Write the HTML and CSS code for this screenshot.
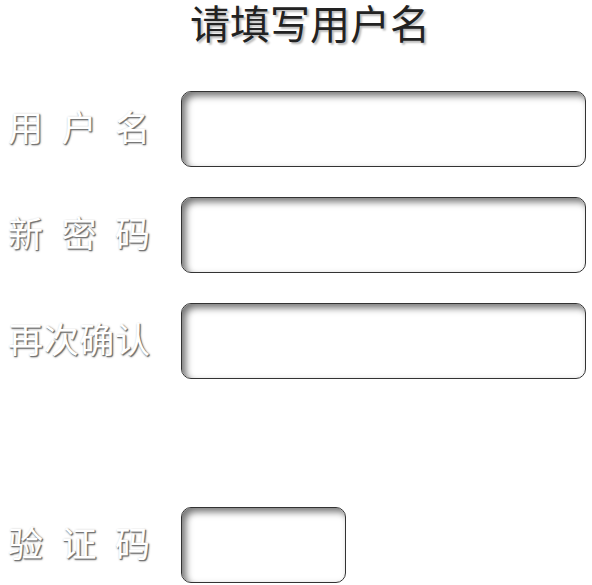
FILE: index.html
```html
<!DOCTYPE html>
<html lang="zh-CN">
<head>
    <meta charset="UTF-8">
    <meta name="viewport" content="width=device-width, initial-scale=1.0">
    <title>请填写用户名</title>
    <link rel="stylesheet" href="styles.css">
</head>
<body>

    <h1 class="title">请填写用户名</h1>

    <form class="form">
        <div class="row">
            <label class="label" for="username">用户名</label>
            <input class="field" type="text" id="username">
        </div>
        <div class="row">
            <label class="label" for="password">新密码</label>
            <input class="field" type="password" id="password">
        </div>
        <div class="row">
            <label class="label" for="confirm">再次确认</label>
            <input class="field" type="password" id="confirm">
        </div>
        <div class="row row-code">
            <label class="label" for="code">验证码</label>
            <input class="field field-short" type="text" id="code">
        </div>
    </form>

</body>
</html>
```

FILE: styles.css
```css
body {
    margin: 0;
    padding: 0 6px 0 8px;
    font-family: "Noto Sans CJK SC", "Noto Sans", sans-serif;
    background: #fff;
}

.title {
    margin: 0;
    padding: 0 0 0 26px;
    font-size: 40px;
    font-weight: normal;
    line-height: 44px;
    text-align: center;
    color: #222;
    text-shadow: 2px 2px 2px #bbb;
}

.form {
    margin-top: 47px;
}

.row {
    display: flex;
    align-items: center;
    gap: 31px;
    margin-bottom: 30px;
}

.row-code {
    margin-top: 128px;
}

.label {
    width: 142px;
    flex-shrink: 0;
    white-space: nowrap;
    font-size: 35px;
    line-height: 40px;
    color: #fff;
    text-align: justify;
    text-align-last: justify;
    text-shadow: 1px 1px 0 #777, 1px 1px 2px #333;
    margin-top: -6px;
}

.field {
    width: 405px;
    height: 76px;
    box-sizing: border-box;
    border: 1px solid #333;
    border-radius: 10px;
    background: #fff;
    box-shadow: inset 4px 4px 7px #777;
    outline: none;
}

.field-short {
    width: 165px;
}
```
